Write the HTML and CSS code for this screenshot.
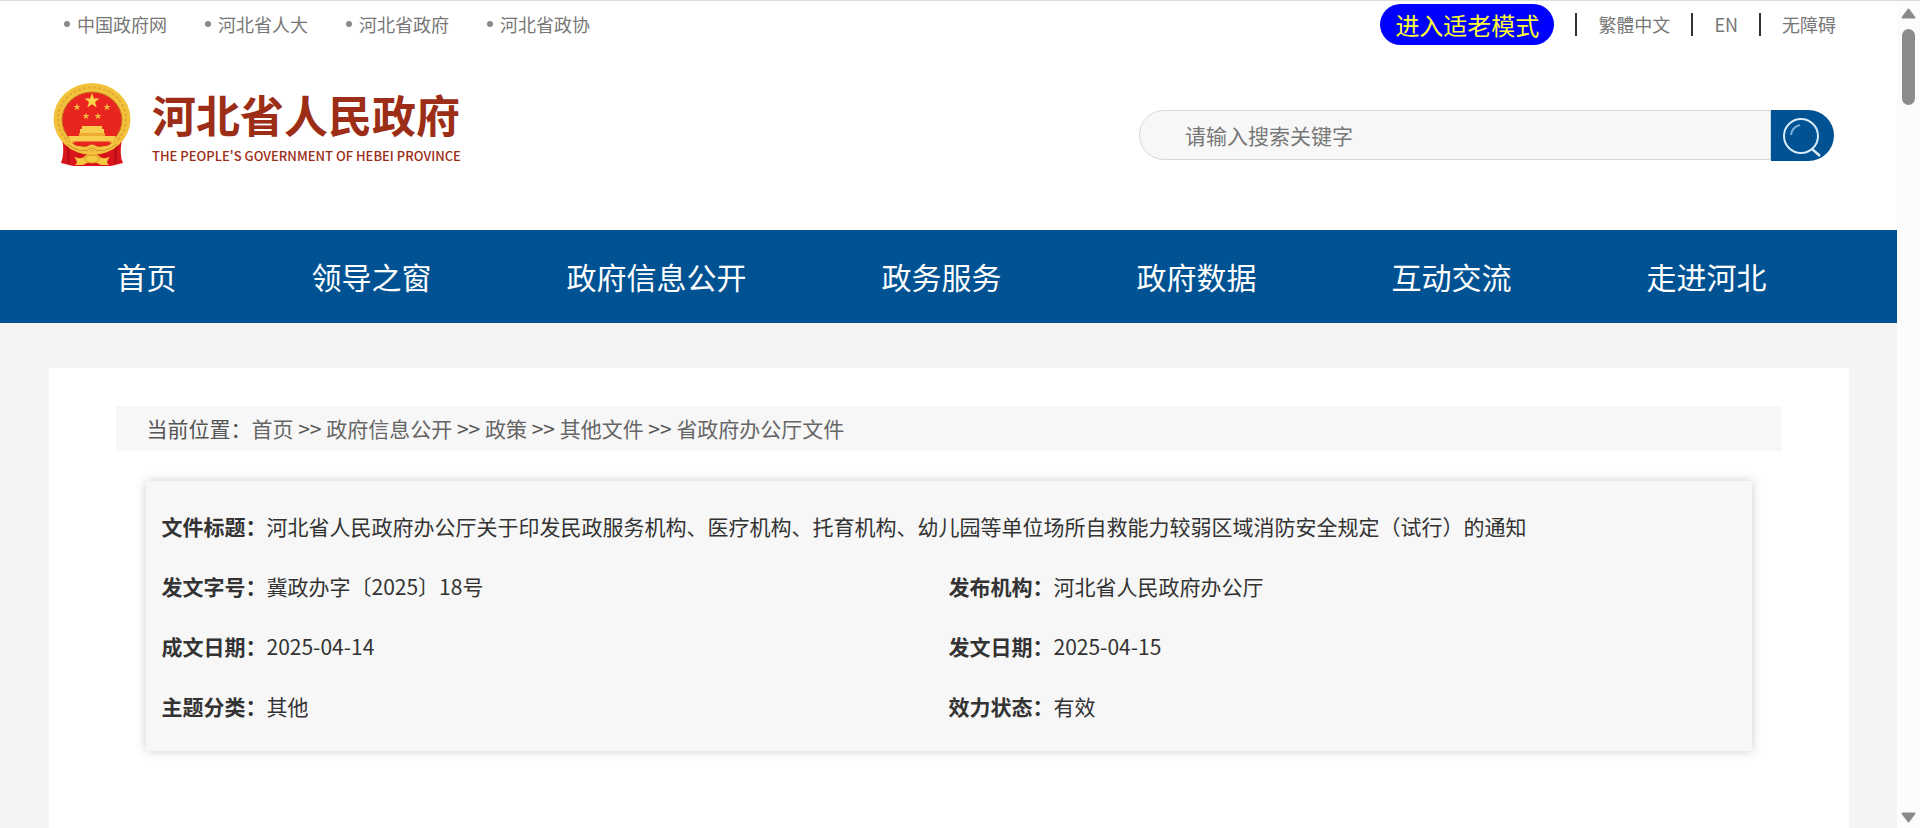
FILE: index.html
```html
<!DOCTYPE html>
<html lang="zh-CN">
<head>
    <meta charset="UTF-8">
    <meta name="viewport" content="width=device-width, initial-scale=1">
    <title>河北省人民政府</title>
    <link rel="stylesheet" href="styles.css">
</head>
<body>

<div class="page">
    <header class="header wrap">
        <div class="topbar">
            <ul class="top-links">
                <li><a href="#">中国政府网</a></li>
                <li><a href="#">河北省人大</a></li>
                <li><a href="#">河北省政府</a></li>
                <li><a href="#">河北省政协</a></li>
            </ul>
            <div class="top-tools">
                <button type="button" class="elder-btn">进入适老模式</button>
                <span class="sep"></span>
                <a href="#">繁體中文</a>
                <span class="sep"></span>
                <a href="#">EN</a>
                <span class="sep"></span>
                <a href="#">无障碍</a>
            </div>
        </div>

        <div class="brand-row">
            <a href="#" class="logo">
                <svg class="emblem" viewBox="0 0 78 84" aria-hidden="true">
                    <path d="M9 56 H69 Q66 72 70 80 L58 83 H20 L8 80 Q12 70 9 56z" fill="#d8141c"/>
                    <path d="M13 61 Q17 70 15 80 M65 61 Q61 70 63 80" stroke="#b30f18" stroke-width="2" fill="none"/>
                    <ellipse cx="39" cy="36" rx="38.500" ry="36" fill="#f3c23c"/>
                    <ellipse cx="39" cy="36" rx="34" ry="31.500" fill="none" stroke="#e2a830" stroke-width="2" stroke-dasharray="3 2"/>
                    <ellipse cx="39" cy="37" rx="30" ry="28" fill="#e9251f" stroke="#c07d1f" stroke-width="1"/>
                    <path d="M39 10 L40.900 15.500 L46.500 15.500 L42 19 L43.700 24.500 L39 21.200 L34.300 24.500 L36 19 L31.500 15.500 L37.100 15.500z" fill="#f8d64a"/>
                    <g fill="#f3b53b">
                        <path id="star" d="M24 20.500 L24.900 23 L27.500 23 L25.400 24.700 L26.200 27.200 L24 25.700 L21.800 27.200 L22.600 24.700 L20.500 23 L23.100 23z"/>
                        <use href="#star" x="30"/>
                        <use href="#star" x="9" y="9"/>
                        <use href="#star" x="21" y="9"/>
                    </g>
                    <path d="M29 43 h20 v3 h2 v4 H27 v-4 h2z M15 53 H63 L60 58.500 H18z" fill="#f8cc4e"/>
                    <path d="M26 50 h26 v3 H26z" fill="#efac35"/>
                    <path d="M18 60 H60 V63 H18z" fill="#e9251f"/>
                    <path d="M12 58 L19 60 Q28 67 35 63 Q39 60 43 63 Q50 67 59 60 L66 58 L60 66 Q49 71 39 67 Q29 71 18 66z" fill="#f5c544"/>
                    <path d="M14 61 Q28 72 39 65 Q50 72 64 61" stroke="#d49429" fill="none"/>
                    <path d="M21 74 Q30 77 33 72 Q39 69 45 72 Q48 77 57 74 Q52 79 56 82 H48 Q39 76 30 82 H22 Q26 79 21 74z" fill="#f6c943"/>
                    <ellipse cx="39" cy="76" rx="7" ry="4" fill="#f6c943" stroke="#d99324"/>
                </svg>
                <span class="logo-text">
                    <span class="logo-cn">河北省人民政府</span>
                    <span class="logo-en">THE PEOPLE'S GOVERNMENT OF HEBEI PROVINCE</span>
                </span>
            </a>
            <form class="search">
                <input type="text" class="search-input" placeholder="请输入搜索关键字" aria-label="请输入搜索关键字">
                <button type="button" class="search-btn" aria-label="搜索">
                    <svg viewBox="0 0 40 40" width="40" height="40" fill="none" stroke="#d7ecfa" stroke-width="2">
                        <circle cx="18" cy="19" r="17"/>
                        <path d="M29 32 L37 39" stroke-width="2.500"/>
                        <path d="M8 18 Q9 10 17 8" stroke="#7aaede" stroke-width="2"/>
                    </svg>
                </button>
            </form>
        </div>
    </header>

    <nav class="nav">
        <div class="nav-inner wrap">
            <a href="#">首页</a>
            <a href="#">领导之窗</a>
            <a href="#">政府信息公开</a>
            <a href="#">政务服务</a>
            <a href="#">政府数据</a>
            <a href="#">互动交流</a>
            <a href="#">走进河北</a>
        </div>
    </nav>

    <main class="content wrap">
        <div class="crumbs">当前位置：<a href="#">首页</a> &gt;&gt; <a href="#">政府信息公开</a> &gt;&gt; <a href="#">政策</a> &gt;&gt; <a href="#">其他文件</a> &gt;&gt; <a href="#">省政府办公厅文件</a></div>

        <dl class="info">
            <div class="info-item full"><dt>文件标题：</dt><dd>河北省人民政府办公厅关于印发民政服务机构、医疗机构、托育机构、幼儿园等单位场所自救能力较弱区域消防安全规定（试行）的通知</dd></div>
            <div class="info-item"><dt>发文字号：</dt><dd>冀政办字〔2025〕18号</dd></div>
            <div class="info-item"><dt>发布机构：</dt><dd>河北省人民政府办公厅</dd></div>
            <div class="info-item"><dt>成文日期：</dt><dd>2025-04-14</dd></div>
            <div class="info-item"><dt>发文日期：</dt><dd>2025-04-15</dd></div>
            <div class="info-item"><dt>主题分类：</dt><dd>其他</dd></div>
            <div class="info-item"><dt>效力状态：</dt><dd>有效</dd></div>
        </dl>
    </main>
</div>

<div class="scrollbar" aria-hidden="true">
    <svg width="15" height="11" viewBox="0 0 15 11"><path d="M7.500 1.500 L13.500 9.500 H1.500z" fill="#8b8b8b" stroke="#8b8b8b" stroke-width="2" stroke-linejoin="round"/></svg>
    <div class="thumb"></div>
    <svg class="arrow-down" width="15" height="11" viewBox="0 0 15 11"><path d="M7.500 9.500 L13.500 1.500 H1.500z" fill="#8b8b8b" stroke="#8b8b8b" stroke-width="2" stroke-linejoin="round"/></svg>
</div>

</body>
</html>
```
FILE: styles.css
```css
* { box-sizing: border-box; }
body {
    margin: 0;
    display: flex;
    min-height: 100vh;
    background: #fff;
    border-top: 1px solid #ddd;
    color: #333;
    font-family: "Noto Sans CJK SC", sans-serif;
}
a { color: inherit; text-decoration: none; }
ul, dl, dd { margin: 0; padding: 0; list-style: none; }
button { border: none; font-family: inherit; cursor: pointer; }

.page { flex: 1; min-width: 0; display: flex; flex-direction: column; background: #f4f4f4; }
.wrap { width: 100%; max-width: 1800px; margin: 0 auto; }

/* header */
.header { max-width: none; padding: 0 48px; background: #fff; }
.topbar {
    display: flex;
    justify-content: space-between;
    align-items: center;
    height: 46px;
    padding: 0 13px 0 16px;
    font-size: 18px;
    color: #777;
}
.top-links { display: flex; gap: 38px; }
.top-links li { display: flex; align-items: center; gap: 7px; }
.top-links li::before { content: ""; width: 6px; height: 6px; border-radius: 50%; background: #888; }
.top-tools { display: flex; align-items: center; gap: 21px; }
.elder-btn {
    height: 41px;
    padding: 0 15px;
    border-radius: 21px;
    background: #00f;
    color: #ff3;
    font-size: 24px;
    line-height: 41px;
}
.sep { width: 2px; height: 23px; background: #333; }

.brand-row {
    display: flex;
    justify-content: space-between;
    align-items: flex-start;
    height: 183px;
    padding: 36px 15px 0 5px;
}
.logo { display: flex; gap: 21px; }
.emblem { width: 78px; height: 84px; }
.logo-text { display: flex; flex-direction: column; padding-top: 7px; color: #9c2d16; white-space: nowrap; }
.logo-cn { font-size: 44px; font-weight: bold; line-height: 48px; }
.logo-en { padding-top: 8px; font-size: 13px; font-weight: 500; line-height: 20px; }

.search { display: flex; width: 695px; height: 51px; margin-top: 27px; }
.search-input {
    flex: 1;
    min-width: 0;
    height: 50px;
    padding: 0 45px;
    border: 1px solid #d5d8d8;
    border-radius: 25px 0 0 25px;
    background: #f7f7f7;
    font-family: inherit;
    font-size: 21px;
}
.search-input::placeholder { color: #777; }
.search-btn {
    display: flex;
    align-items: center;
    justify-content: center;
    width: 63px;
    padding: 2px 0 0;
    border-radius: 0 26px 26px 0;
    background: #005293;
}

/* main menu */
.nav { background: #005293; }
.nav-inner {
    display: flex;
    justify-content: space-between;
    padding: 0 82px 0 68px;
    color: #fff;
    font-size: 30px;
    line-height: 93px;
}

/* article */
.content { flex: 1; margin-top: 45px; padding: 38px 67px; background: #fff; }
.crumbs { padding: 0 31px; background: #f7f7f7; color: #555; font-size: 21px; line-height: 45px; }
.crumbs a { color: #666; }
.info {
    display: grid;
    grid-template-columns: 1fr 1fr;
    margin: 30px 30px 0;
    padding: 15px 16px;
    background: #f7f7f7;
    box-shadow: 0 0 10px rgba(0, 0, 0, 0.2);
    font-size: 21px;
    line-height: 60px;
}
.info-item { display: flex; }
.info-item.full { grid-column: 1 / -1; }
.info dt { font-weight: bold; flex-shrink: 0; }

/* scroll track */
.scrollbar {
    display: flex;
    flex-direction: column;
    align-items: center;
    gap: 10px;
    width: 23px;
    padding: 7px 0 5px;
    background: #fcfcfc;
}
.thumb { width: 13px; height: 76px; border-radius: 7px; background: #8b8b8b; }
.arrow-down { margin-top: auto; }
```
